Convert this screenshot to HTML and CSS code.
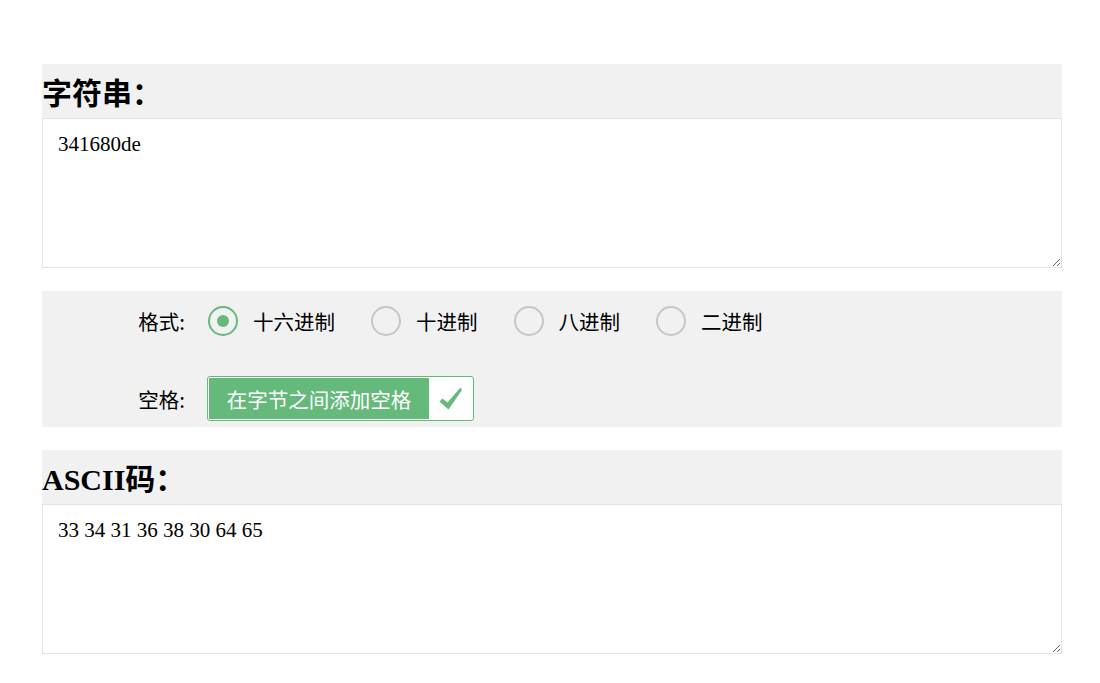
FILE: index.html
```html
<!DOCTYPE html>
<html lang="zh">
<head>
<meta charset="utf-8">
<title>字符串转ASCII码</title>
<link rel="stylesheet" href="styles.css">
</head>
<body>
<div class="wrap">
  <div class="section-head">字符串：</div>
  <textarea class="box">341680de</textarea>

  <div class="options">
    <div class="row">
      <div class="label">格式:</div>
      <div class="radios">
        <label class="radio"><span class="circle on"></span><span class="rtext">十六进制</span></label>
        <label class="radio"><span class="circle"></span><span class="rtext">十进制</span></label>
        <label class="radio"><span class="circle"></span><span class="rtext">八进制</span></label>
        <label class="radio"><span class="circle"></span><span class="rtext">二进制</span></label>
      </div>
    </div>
    <div class="row">
      <div class="label">空格:</div>
      <div class="toggle">
        <span class="toggle-text">在字节之间添加空格</span>
        <span class="toggle-check">
          <svg width="24" height="24" viewBox="0 0 24 24"><path d="M0.5 14.5 L3.5 11.5 L8.5 15.5 L21.5 0.5 L23 3 L9.5 22.5 Z" fill="#64b97b"/></svg>
        </span>
      </div>
    </div>
  </div>

  <div class="section-head">ASCII码：</div>
  <textarea class="box">33 34 31 36 38 30 64 65</textarea>
</div>
</body>
</html>
```

FILE: styles.css
```css
html, body {
  margin: 0;
  padding: 0;
  background: #ffffff;
}
.wrap {
  width: 1020px;
  margin: 0;
  padding: 64px 0 0 42px;
  display: flex;
  flex-direction: column;
}
.section-head {
  height: 54px;
  background: #f1f1f1;
  display: flex;
  align-items: center;
  font-family: "Liberation Serif", "Noto Sans CJK SC", serif;
  font-weight: bold;
  font-size: 30px;
  color: #000;
}
.box {
  display: block;
  box-sizing: border-box;
  width: 1020px;
  height: 150px;
  margin: 0;
  border: 1px solid #e3e3e3;
  padding: 13px 15px 12px;
  font-family: "Liberation Serif", "Noto Sans CJK SC", serif;
  font-size: 21px;
  color: #000;
  background: #fff;
  resize: both;
  outline: none;
}
.options {
  margin: 23px 0;
  background: #f1f1f1;
  padding: 7px 0 6px;
  display: flex;
  flex-direction: column;
  gap: 33px;
}
.row {
  height: 45px;
  display: flex;
  align-items: center;
  gap: 22px;
}
.label {
  width: 143px;
  text-align: right;
  font-family: "Noto Sans CJK SC", sans-serif;
  font-size: 20.5px;
  line-height: 28px;
  color: #000;
}
.radios {
  display: flex;
  align-items: center;
  gap: 36px;
  margin-left: 1px;
}
.radio {
  display: flex;
  align-items: center;
  gap: 15px;
}
.circle {
  box-sizing: border-box;
  width: 30px;
  height: 30px;
  border-radius: 50%;
  border: 2px solid #c6c6c6;
  display: flex;
  align-items: center;
  justify-content: center;
}
.circle.on {
  border-color: #64b97b;
}
.circle.on::after {
  content: "";
  width: 12px;
  height: 12px;
  border-radius: 50%;
  background: #64b97b;
}
.rtext {
  font-family: "Noto Sans CJK SC", sans-serif;
  font-size: 20.5px;
  line-height: 28px;
  color: #000;
}
.toggle {
  box-sizing: border-box;
  width: 267px;
  height: 45px;
  border: 1px solid #64b97b;
  border-radius: 3px;
  display: flex;
  overflow: hidden;
  background: #fff;
}
.toggle-text {
  width: 220px;
  margin: 1px 0 1px 1px;
  background: #64b97b;
  color: #fff;
  font-family: "Noto Sans CJK SC", sans-serif;
  font-size: 20.5px;
  display: flex;
  align-items: center;
  justify-content: center;
}
.toggle-check {
  flex: 1;
  display: flex;
  align-items: center;
  justify-content: center;
}
```
